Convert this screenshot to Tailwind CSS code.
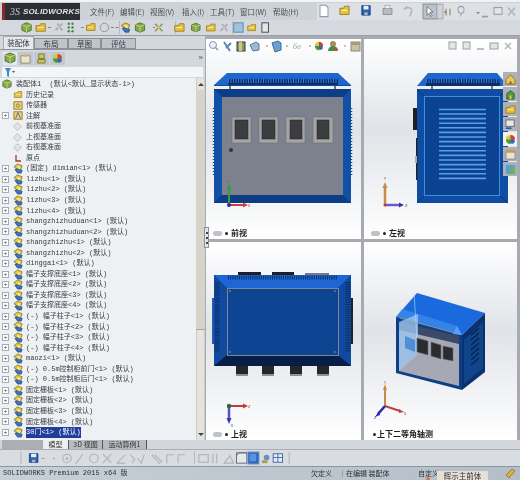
<!DOCTYPE html>
<html><head><meta charset="utf-8">
<script src="https://cdn.jsdelivr.net/npm/@tailwindcss/browser@4"></script>
</head>
<body class="m-0 bg-[#d8dce2]">
<svg width="0" height="0" class="absolute">
<defs>
<symbol id="asm" viewBox="0 0 12 12"><path d="M1 4l4-3 5 2-1 3-4 1z" fill="#e8c63c" stroke="#6a5a10" stroke-width=".7"/><path d="M2 7l4-1 4 2-1 3-4 0z" fill="#3d74b8" stroke="#1c3c70" stroke-width=".7"/><path d="M5 3l3 1v3l-3-1z" fill="#f5e58a"/></symbol>
<symbol id="plane" viewBox="0 0 12 12"><path d="M1 6l5-5 5 5-5 5z" fill="#eef0f2" stroke="#8b9098" stroke-width=".8"/><path d="M4 6l2-2 2 2-2 2z" fill="none" stroke="#b0b5bb" stroke-width=".6"/></symbol>
<symbol id="tb" viewBox="0 0 12 12"><path d="M1 3l5-2 5 2v6l-5 2-5-2z" fill="#7cab52" stroke="#3a6426" stroke-width=".8"/><path d="M1 3l5 2 5-2M6 5v6" fill="none" stroke="#e8d05a"/></symbol>
<symbol id="yl" viewBox="0 0 12 12"><path d="M1 4h4l1-2h5v8H1z" fill="#e6c03e" stroke="#8d7214" stroke-width=".8"/><path d="M3 6h6" stroke="#fff2a8"/></symbol>
<symbol id="gr" viewBox="0 0 12 12"><path d="M2 10L10 2M4 2l6 8" stroke="#a8adb5" stroke-width="2" fill="none"/><circle cx="6" cy="6" r="1.5" fill="#c5c8cd"/></symbol>
<symbol id="bl" viewBox="0 0 12 12"><path d="M2 2h8v8H2z" fill="#5c8ed0" stroke="#22508f"/><path d="M4 2h4v3H4z" fill="#e8eef6"/></symbol>
<symbol id="sv" viewBox="0 0 12 12"><path d="M1 1h10v10H1z" fill="#2a62b4" stroke="#183c7a"/><path d="M3 1h6v4H3z" fill="#e8eef6"/><path d="M4 8h4v3H4z" fill="#a8b4c8"/></symbol>
<symbol id="ball" viewBox="0 0 12 12"><circle cx="6" cy="6" r="5" fill="#d8c83c"/><path d="M6 1a5 5 0 0 1 5 5H6z" fill="#d84030"/><path d="M1 6a5 5 0 0 0 5 5V6z" fill="#4b9a3e"/><circle cx="8" cy="8" r="2.5" fill="#3066c0"/></symbol>
</defs>
</svg>
<div class="w-[520px] h-[480px] flex flex-col overflow-hidden bg-[#d8dce2] text-[#33373d] blur-[0.3px]" style="font-family:'Noto Sans CJK SC','Liberation Sans',sans-serif">

<!-- title bar -->
<div class="h-[20px] flex items-stretch bg-[#cdd2d9] pt-[1px] shrink-0 border-t-2 border-[#f2f3f5]">
 <div class="w-[78px] ml-[2px] bg-[#2c3036] flex items-center text-white overflow-hidden">
  <div class="w-[3px] h-full bg-[#8f2429]"></div>
  <span class="ml-[5px] text-[10px] italic leading-none text-[#c8c8c8]" style="font-family:'Liberation Serif',serif">3S</span>
  <span class="ml-[3px] text-[8px] font-bold italic leading-none tracking-[0.2px] text-[#e4e4e4]" style="font-family:'Liberation Sans',sans-serif">SOLIDWORKS</span>
 </div>
 <div class="flex items-center text-[7.5px] leading-none text-[#4a4f56] whitespace-nowrap ml-[10px] w-[227px]">
  <span class="w-[30px]">文件(F)</span><span class="w-[30px]">编辑(E)</span><span class="w-[32px]">视图(V)</span><span class="w-[28px]">插入(I)</span><span class="w-[30px]">工具(T)</span><span class="w-[33px]">窗口(W)</span><span>帮助(H)</span>
 </div>
 <svg class="flex-1 h-full" viewBox="317 3 203 15" preserveAspectRatio="none">
  <rect x="316" y="3" width="204" height="15" fill="#dde0e4"/>
  <path d="M320 5h6l2 2v8h-8z" fill="#fff" stroke="#8f9bad"/>
  <use href="#yl" x="339" y="4" width="11" height="11"/>
  <use href="#sv" x="361" y="4" width="10" height="11"/>
  <rect x="383" y="8" width="9" height="5" fill="#b7bcc2" stroke="#71767d" stroke-width=".6"/><rect x="385" y="5" width="5" height="3" fill="#eee" stroke="#8a8f96" stroke-width=".5"/>
  <path d="M404 9a5 5 0 0 1 8 0M404 9l3-3M410 15l2-6" fill="none" stroke="#b3b7bd" stroke-width="1.5"/>
  <rect x="423" y="4" width="14" height="13" fill="#bcc2ca" stroke="#8c929a"/>
  <path d="M427 6v8l2-2 2 3 1-1-2-3h3z" fill="#fff" stroke="#55606e" stroke-width=".7"/>
  <rect x="437" y="4" width="6" height="13" fill="#d0d4d9" stroke="#a7acb3"/>
  <path d="M444 11h3" stroke="#777"/><path d="M446 8v6M450 8v6" stroke="#8b7a50"/>
  <circle cx="461" cy="9" r="3" fill="none" stroke="#9aa0a8"/><path d="M461 12v3" stroke="#9aa0a8"/>
  <path d="M476 11l2 2 2-2" fill="#888"/>
  <path d="M482 15h6" stroke="#9aa0a8" stroke-width="1.5"/>
  <rect x="494" y="7" width="8" height="6" fill="#e3e5e8" stroke="#9aa0a8"/>
  <path d="M508 7l7 7M515 7l-7 7" stroke="#b2b6bb" stroke-width="1.5"/>
 </svg>
</div>

<!-- main toolbar -->
<div class="h-[16px] shrink-0 bg-[#d5d9df] border-b border-[#9a9fa6]">
 <svg class="w-full h-full" viewBox="0 20 520 16">
  <use href="#tb" x="5" y="22" width="12" height="12"/>
  <use href="#yl" x="20" y="22" width="12" height="12"/>
  <path d="M34 28h3M106 28h3M101 28h3M69 28h3M146 28h2" stroke="#777"/>
  <use href="#gr" x="40" y="22" width="11" height="11"/>
  <g fill="#3f8a46"><circle cx="56" cy="24" r="1.3"/><circle cx="60" cy="24" r="1.3"/><circle cx="56" cy="28" r="1.3"/><circle cx="60" cy="28" r="1.3"/><circle cx="56" cy="32" r="1.3"/><circle cx="60" cy="32" r="1.3"/></g>
  <use href="#yl" x="74" y="22" width="11" height="11"/>
  <circle cx="94" cy="28" r="4.5" fill="#d6d8da" stroke="#8d9298"/>
  <path d="M110 21v14M170 21v14M231 21v14" stroke="#b0b4ba"/>
  <use href="#asm" x="111" y="22" width="12" height="12"/>
  <use href="#tb" x="126" y="22" width="12" height="12"/>
  <path d="M148 24l8 8M156 24l-8 8" stroke="#7c9e52" stroke-width="1.6"/><circle cx="152" cy="28" r="1.5" fill="#e6c03e"/>
  <use href="#yl" x="168" y="22" width="12" height="12"/>
  <use href="#tb" x="186" y="22" width="11" height="12"/>
  <use href="#yl" x="202" y="22" width="11" height="12"/>
  <use href="#gr" x="216" y="22" width="11" height="12"/>
  <rect x="232" y="23" width="10" height="10" fill="#9fc3de" stroke="#5d86a8"/>
  <use href="#yl" x="246" y="22" width="10" height="12"/>
  <rect x="262" y="23" width="7" height="10" fill="#e6e7e5" stroke="#444"/>
 </svg>
</div>

<!-- main -->
<div class="flex-1 flex min-h-0">
 <!-- left panel -->
 <div class="w-[205px] shrink-0 flex flex-col bg-[#d3d8de]">
  <!-- tabs -->
  <div class="h-[14px] flex items-end pl-[3px] text-[7.5px] leading-none border-b border-[#8f949b] shrink-0">
   <div class="w-[31px] h-[13px] flex items-center justify-center bg-[#e6e9ec] border border-b-0 border-[#a6abb2]">装配体</div>
   <div class="w-[34px] h-[11px] flex items-center justify-center bg-[#bfc4ca] border border-[#8a8f96]">布局</div>
   <div class="w-[33px] h-[11px] flex items-center justify-center bg-[#bfc4ca] border border-[#8a8f96]">草图</div>
   <div class="w-[35px] h-[11px] flex items-center justify-center bg-[#bfc4ca] border border-[#8a8f96]">评估</div>
  </div>
  <!-- icon tabs -->
  <div class="h-[14px] mt-[1px] flex items-center pl-[3px] gap-[1px] shrink-0">
   <div class="w-[14px] h-[13px] bg-[#e6e9ec] flex items-center justify-center"><svg width="12" height="12"><use href="#tb" width="12" height="12"/></svg></div>
   <div class="w-[15px] h-[13px] bg-[#c3c8ce] flex items-center justify-center"><svg width="11" height="11" viewBox="0 0 12 12"><path d="M1 3h10v8H1z" fill="#e8e4d8" stroke="#9a8a6a"/><path d="M4 1h4v3H4z" fill="#d2b468"/></svg></div>
   <div class="w-[15px] h-[13px] bg-[#c3c8ce] flex items-center justify-center"><svg width="11" height="11" viewBox="0 0 12 12"><path d="M3 1h6v5H3zM2 7h8v4H2z" fill="#d8c04e" stroke="#4a5a2a" stroke-width=".7"/></svg></div>
   <div class="w-[15px] h-[13px] bg-[#c3c8ce] flex items-center justify-center"><svg width="11" height="11"><use href="#ball" width="11" height="11"/></svg></div>
   <span class="ml-auto mr-[2px] text-[8px] leading-none text-[#555]" style="font-family:'Liberation Sans',sans-serif">»</span>
  </div>
  <!-- filter -->
  <div class="h-[10px] mt-[2px] mx-[2px] bg-[#f4f5f7] flex items-center pl-[3px] shrink-0">
   <svg width="10" height="9" viewBox="0 0 10 9"><path d="M0 0h6L4 4v5L2 8V4z" fill="#3d8ccc"/><path d="M7 3h3L8.500 5z" fill="#555"/></svg>
  </div>
  <!-- tree -->
  <div class="flex-1 min-h-0 flex bg-[#eef1f4] mt-[1px] overflow-hidden">
   <div class="flex-1 pt-[1px] pl-[2px] text-[7px] leading-[10.56px] text-[#383c42] overflow-hidden whitespace-nowrap" style="font-family:'Liberation Mono','Noto Sans CJK SC',monospace">
    <div class="h-[10.56px] flex items-center"><svg width="10" height="10" class="mr-[3px]"><use href="#tb" width="10" height="10"/></svg><span class="ml-[1px]">装配体1&nbsp;&nbsp;(默认&lt;默认_显示状态-1&gt;)</span></div>
    <div class="h-[10.56px] flex items-center pl-[11px]"><svg width="10" height="9" class="mr-[3px]"><use href="#yl" width="10" height="9"/></svg>历史记录</div>
    <div class="h-[10.56px] flex items-center pl-[11px]"><svg width="10" height="9" class="mr-[3px]" viewBox="0 0 12 11"><rect x="1" y="1" width="10" height="9" fill="#eed47a" stroke="#8a6a20"/><circle cx="6" cy="5.500" r="2" fill="none" stroke="#8a6a20"/></svg>传感器</div>
    <div class="h-[10.56px] flex items-center"><span class="w-[7px] h-[7px] mr-[4px] border border-[#a8adb3] bg-white text-[6px] leading-[5px] text-center">+</span><svg width="10" height="9" class="mr-[3px]" viewBox="0 0 12 11"><rect x="1" y="1" width="10" height="9" fill="#eed47a" stroke="#8a6a20"/><path d="M3 9l3-7 3 7" fill="none" stroke="#2e5fa8"/></svg>注解</div>
    <div class="h-[10.56px] flex items-center pl-[11px]"><svg width="9" height="9" class="mr-[4px]"><use href="#plane" width="9" height="9"/></svg>前视基准面</div>
    <div class="h-[10.56px] flex items-center pl-[11px]"><svg width="9" height="9" class="mr-[4px]"><use href="#plane" width="9" height="9"/></svg>上视基准面</div>
    <div class="h-[10.56px] flex items-center pl-[11px]"><svg width="9" height="9" class="mr-[4px]"><use href="#plane" width="9" height="9"/></svg>右视基准面</div>
    <div class="h-[10.56px] flex items-center pl-[11px]"><svg width="9" height="9" class="mr-[4px]" viewBox="0 0 9 9"><path d="M3 1v6h5" fill="none" stroke="#a83a2a" stroke-width="1.300"/></svg>原点</div>

    <div class="h-[10.56px] flex items-center"><span class="w-[7px] h-[7px] mr-[4px] border border-[#a8adb3] bg-white text-[6px] leading-[5px] text-center">+</span><svg width="11" height="11" class="mr-[2px]"><use href="#asm" width="11" height="11"/></svg>(固定) dimian&lt;1&gt; (默认)</div>
    <div class="h-[10.56px] flex items-center"><span class="w-[7px] h-[7px] mr-[4px] border border-[#a8adb3] bg-white text-[6px] leading-[5px] text-center">+</span><svg width="11" height="11" class="mr-[2px]"><use href="#asm" width="11" height="11"/></svg>lizhu&lt;1&gt; (默认)</div>
    <div class="h-[10.56px] flex items-center"><span class="w-[7px] h-[7px] mr-[4px] border border-[#a8adb3] bg-white text-[6px] leading-[5px] text-center">+</span><svg width="11" height="11" class="mr-[2px]"><use href="#asm" width="11" height="11"/></svg>lizhu&lt;2&gt; (默认)</div>
    <div class="h-[10.56px] flex items-center"><span class="w-[7px] h-[7px] mr-[4px] border border-[#a8adb3] bg-white text-[6px] leading-[5px] text-center">+</span><svg width="11" height="11" class="mr-[2px]"><use href="#asm" width="11" height="11"/></svg>lizhu&lt;3&gt; (默认)</div>
    <div class="h-[10.56px] flex items-center"><span class="w-[7px] h-[7px] mr-[4px] border border-[#a8adb3] bg-white text-[6px] leading-[5px] text-center">+</span><svg width="11" height="11" class="mr-[2px]"><use href="#asm" width="11" height="11"/></svg>lizhu&lt;4&gt; (默认)</div>
    <div class="h-[10.56px] flex items-center"><span class="w-[7px] h-[7px] mr-[4px] border border-[#a8adb3] bg-white text-[6px] leading-[5px] text-center">+</span><svg width="11" height="11" class="mr-[2px]"><use href="#asm" width="11" height="11"/></svg>shangzhizhuduan&lt;1&gt; (默认)</div>
    <div class="h-[10.56px] flex items-center"><span class="w-[7px] h-[7px] mr-[4px] border border-[#a8adb3] bg-white text-[6px] leading-[5px] text-center">+</span><svg width="11" height="11" class="mr-[2px]"><use href="#asm" width="11" height="11"/></svg>shangzhizhuduan&lt;2&gt; (默认)</div>
    <div class="h-[10.56px] flex items-center"><span class="w-[7px] h-[7px] mr-[4px] border border-[#a8adb3] bg-white text-[6px] leading-[5px] text-center">+</span><svg width="11" height="11" class="mr-[2px]"><use href="#asm" width="11" height="11"/></svg>shangzhizhu&lt;1&gt; (默认)</div>
    <div class="h-[10.56px] flex items-center"><span class="w-[7px] h-[7px] mr-[4px] border border-[#a8adb3] bg-white text-[6px] leading-[5px] text-center">+</span><svg width="11" height="11" class="mr-[2px]"><use href="#asm" width="11" height="11"/></svg>shangzhizhu&lt;2&gt; (默认)</div>
    <div class="h-[10.56px] flex items-center"><span class="w-[7px] h-[7px] mr-[4px] border border-[#a8adb3] bg-white text-[6px] leading-[5px] text-center">+</span><svg width="11" height="11" class="mr-[2px]"><use href="#asm" width="11" height="11"/></svg>dinggai&lt;1&gt; (默认)</div>
    <div class="h-[10.56px] flex items-center"><span class="w-[7px] h-[7px] mr-[4px] border border-[#a8adb3] bg-white text-[6px] leading-[5px] text-center">+</span><svg width="11" height="11" class="mr-[2px]"><use href="#asm" width="11" height="11"/></svg>幅子支撑底座&lt;1&gt; (默认)</div>
    <div class="h-[10.56px] flex items-center"><span class="w-[7px] h-[7px] mr-[4px] border border-[#a8adb3] bg-white text-[6px] leading-[5px] text-center">+</span><svg width="11" height="11" class="mr-[2px]"><use href="#asm" width="11" height="11"/></svg>幅子支撑底座&lt;2&gt; (默认)</div>
    <div class="h-[10.56px] flex items-center"><span class="w-[7px] h-[7px] mr-[4px] border border-[#a8adb3] bg-white text-[6px] leading-[5px] text-center">+</span><svg width="11" height="11" class="mr-[2px]"><use href="#asm" width="11" height="11"/></svg>幅子支撑底座&lt;3&gt; (默认)</div>
    <div class="h-[10.56px] flex items-center"><span class="w-[7px] h-[7px] mr-[4px] border border-[#a8adb3] bg-white text-[6px] leading-[5px] text-center">+</span><svg width="11" height="11" class="mr-[2px]"><use href="#asm" width="11" height="11"/></svg>幅子支撑底座&lt;4&gt; (默认)</div>
    <div class="h-[10.56px] flex items-center"><span class="w-[7px] h-[7px] mr-[4px] border border-[#a8adb3] bg-white text-[6px] leading-[5px] text-center">+</span><svg width="11" height="11" class="mr-[2px]"><use href="#asm" width="11" height="11"/></svg>(-) 幅子柱子&lt;1&gt; (默认)</div>
    <div class="h-[10.56px] flex items-center"><span class="w-[7px] h-[7px] mr-[4px] border border-[#a8adb3] bg-white text-[6px] leading-[5px] text-center">+</span><svg width="11" height="11" class="mr-[2px]"><use href="#asm" width="11" height="11"/></svg>(-) 幅子柱子&lt;2&gt; (默认)</div>
    <div class="h-[10.56px] flex items-center"><span class="w-[7px] h-[7px] mr-[4px] border border-[#a8adb3] bg-white text-[6px] leading-[5px] text-center">+</span><svg width="11" height="11" class="mr-[2px]"><use href="#asm" width="11" height="11"/></svg>(-) 幅子柱子&lt;3&gt; (默认)</div>
    <div class="h-[10.56px] flex items-center"><span class="w-[7px] h-[7px] mr-[4px] border border-[#a8adb3] bg-white text-[6px] leading-[5px] text-center">+</span><svg width="11" height="11" class="mr-[2px]"><use href="#asm" width="11" height="11"/></svg>(-) 幅子柱子&lt;4&gt; (默认)</div>
    <div class="h-[10.56px] flex items-center"><span class="w-[7px] h-[7px] mr-[4px] border border-[#a8adb3] bg-white text-[6px] leading-[5px] text-center">+</span><svg width="11" height="11" class="mr-[2px]"><use href="#asm" width="11" height="11"/></svg>maozi&lt;1&gt; (默认)</div>
    <div class="h-[10.56px] flex items-center"><span class="w-[7px] h-[7px] mr-[4px] border border-[#a8adb3] bg-white text-[6px] leading-[5px] text-center">+</span><svg width="11" height="11" class="mr-[2px]"><use href="#asm" width="11" height="11"/></svg>(-) 0.5m控制柜前门&lt;1&gt; (默认)</div>
    <div class="h-[10.56px] flex items-center"><span class="w-[7px] h-[7px] mr-[4px] border border-[#a8adb3] bg-white text-[6px] leading-[5px] text-center">+</span><svg width="11" height="11" class="mr-[2px]"><use href="#asm" width="11" height="11"/></svg>(-) 0.5m控制柜后门&lt;1&gt; (默认)</div>
    <div class="h-[10.56px] flex items-center"><span class="w-[7px] h-[7px] mr-[4px] border border-[#a8adb3] bg-white text-[6px] leading-[5px] text-center">+</span><svg width="11" height="11" class="mr-[2px]"><use href="#asm" width="11" height="11"/></svg>固定栅板&lt;1&gt; (默认)</div>
    <div class="h-[10.56px] flex items-center"><span class="w-[7px] h-[7px] mr-[4px] border border-[#a8adb3] bg-white text-[6px] leading-[5px] text-center">+</span><svg width="11" height="11" class="mr-[2px]"><use href="#asm" width="11" height="11"/></svg>固定栅板&lt;2&gt; (默认)</div>
    <div class="h-[10.56px] flex items-center"><span class="w-[7px] h-[7px] mr-[4px] border border-[#a8adb3] bg-white text-[6px] leading-[5px] text-center">+</span><svg width="11" height="11" class="mr-[2px]"><use href="#asm" width="11" height="11"/></svg>固定栅板&lt;3&gt; (默认)</div>
    <div class="h-[10.56px] flex items-center"><span class="w-[7px] h-[7px] mr-[4px] border border-[#a8adb3] bg-white text-[6px] leading-[5px] text-center">+</span><svg width="11" height="11" class="mr-[2px]"><use href="#asm" width="11" height="11"/></svg>固定栅板&lt;4&gt; (默认)</div>
    <div class="h-[10.56px] flex items-center"><span class="w-[7px] h-[7px] mr-[4px] border border-[#a8adb3] bg-white text-[6px] leading-[5px] text-center">+</span><svg width="11" height="11" class="mr-[2px]"><use href="#asm" width="11" height="11"/></svg><span class="bg-[#1f3f9a] text-white">30门&lt;1&gt; (默认)</span></div>
   </div>
   <!-- scrollbar -->
   <div class="w-[9px] shrink-0 flex flex-col bg-[#e6e3da] border-x border-[#c8cbcf]">
    <div class="h-[12px] flex items-center justify-center"><span class="w-0 h-0 border-x-[3px] border-x-transparent border-b-[3px] border-b-[#444]"></span></div>
    <div class="h-[240px] mx-[-1px] bg-[#d6d3c8] border-b border-[#a6a6a0]"></div>
    <div class="flex-1"></div>
    <div class="h-[12px] flex items-center justify-center"><span class="w-0 h-0 border-x-[3px] border-x-transparent border-t-[3px] border-t-[#444]"></span></div>
   </div>
  </div>
 </div>

 <!-- viewports -->
 <div class="relative flex-1 grid grid-cols-[155px_153px] grid-rows-[200px_198px] gap-[3px] pl-[1px] pt-[3px] bg-[#a7abb1]">
  <div class="absolute left-[-1px] top-[191px] w-[5px] h-[21px] bg-[#e2e4e7] border border-[#8d9197] z-10 flex flex-col items-center justify-center gap-[3px]"><span class="w-[2px] h-[2px] bg-[#444]"></span><span class="w-[2px] h-[2px] bg-[#444]"></span><span class="w-[2px] h-[2px] bg-[#444]"></span></div>

  <!-- front -->
  <div class="relative bg-[linear-gradient(180deg,#fff_0%,#e0e3e8_45%,#fff_100%)] overflow-hidden">
   <svg class="block" width="155" height="200" viewBox="206 39 155 200">
    <circle cx="213" cy="45" r="3.500" fill="#eef" stroke="#8a97a6"/><path d="M215 47l3 3" stroke="#8a97a6" stroke-width="1.500"/>
    <path d="M224 42l6 9M231 43l-5 5" stroke="#5d89b5" stroke-width="2"/>
    <rect x="237" y="42" width="8" height="9" fill="#7ca06c" stroke="#335"/><rect x="239" y="42" width="3" height="9" fill="#d8c46a"/>
    <path d="M250 45l6-3 3 2v6l-6 1z" fill="#9db8d0" stroke="#5a7896"/>
    <path d="M266 46h2M286 46h2M309 46h2M344 46h2" stroke="#888"/>
    <path d="M272 43l6-2 3 2v7l-6 2z" fill="#6b9fd0" stroke="#3c6a9c"/>
    <text x="293" y="49" font-size="8" font-style="italic" fill="#9da2aa" font-family="Liberation Serif">6σ</text>
    <use href="#ball" x="314" y="41" width="10" height="10"/>
    <circle cx="333" cy="44" r="3" fill="#a88a5c"/><path d="M328 51a5 5 0 0 1 10 0z" fill="#4a8a4a"/><circle cx="336" cy="49" r="1.500" fill="#d84030"/>
    <rect x="351" y="42" width="9" height="9" fill="#c8c2a8" stroke="#8e8a74"/><rect x="351" y="42" width="9" height="3" fill="#a59a70"/>
    <path d="M214 85l13-12h111l13 12z" fill="#1d66cc"/>
    <rect x="228" y="79" width="110" height="6" fill="#0e2f66"/>
    <path d="M228 81h110" stroke="#2d7ae0" stroke-dasharray="1 1.500" stroke-width="4"/>
    <rect x="214" y="85" width="137" height="1" fill="#0f4aa0"/>
    <rect x="229" y="86" width="2" height="4" fill="#6f7478"/><rect x="334" y="86" width="2" height="4" fill="#6f7478"/>
    <rect x="214" y="89" width="137" height="114" fill="#1050a6"/>
    <path d="M214 89h137l-8 8H222z" fill="#0c3d85"/><path d="M214 203h137l-8-8H222z" fill="#0c3d85"/>
    <rect x="222" y="97" width="121" height="98" fill="#7d808d"/>
    <g fill="#a4a4a4" stroke="#666a70" stroke-width=".5"><rect x="232" y="117" width="19" height="26"/><rect x="259" y="117" width="19" height="26"/><rect x="286" y="117" width="19" height="26"/><rect x="313" y="117" width="20" height="26"/></g>
    <g fill="#3c3d40" stroke="#222" stroke-width=".5"><rect x="235" y="120" width="13" height="19"/><rect x="262" y="120" width="13" height="19"/><rect x="290" y="120" width="12" height="19"/><rect x="317" y="120" width="12" height="19"/></g>
    <circle cx="231" cy="150" r="2" fill="#2f3340"/>
    <path d="M213.500 108v68M351.500 108v68" stroke="#184a8a" stroke-width="1.500" stroke-dasharray="1 2"/>
    <path d="M229 205v-17" stroke="#3a9a44" stroke-width="2"/><path d="M226.500 190l2.500-6 2.500 6z" fill="#3a9a44"/>
    <path d="M229 205h15" stroke="#d04040" stroke-width="2"/><path d="M243 202.500l5 2.500-5 2.500z" fill="#d04040"/>
    <circle cx="229" cy="205" r="2" fill="#2424c0"/>
    <text x="227" y="183" font-size="4" fill="#666">Y</text><text x="248" y="207" font-size="4" fill="#a33">X</text>
   </svg>
   <div class="absolute left-[7px] top-[189px] flex items-center gap-[3px] text-[8px] font-bold leading-[10px] text-[#222]"><span class="w-[9px] h-[5px] rounded-full bg-[#bfc3c8]"></span><span class="w-[3px] h-[3px] rounded-full bg-[#222]"></span><span>前视</span></div>
  </div>

  <!-- left -->
  <div class="relative bg-[linear-gradient(180deg,#fff_0%,#e0e3e8_45%,#fff_100%)] overflow-hidden">
   <svg class="block" width="153" height="200" viewBox="364 39 153 200">
    <rect x="449" y="42" width="7" height="7" fill="#e3e5e7" stroke="#9aa0a6"/><rect x="463" y="42" width="7" height="7" fill="#e3e5e7" stroke="#9aa0a6"/>
    <path d="M477 49h7" stroke="#a8adb3" stroke-width="1.500"/><rect x="490" y="43" width="8" height="6" fill="#e3e5e7" stroke="#9aa0a6"/>
    <path d="M505 43l6 6M511 43l-6 6" stroke="#b2b6bb" stroke-width="1.500"/>
    <path d="M417 86l11-13h69l11 13z" fill="#1d66cc"/>
    <rect x="426" y="79" width="74" height="7" fill="#0e2f66"/>
    <path d="M426 81h74" stroke="#2d7ae0" stroke-dasharray="1 1.500" stroke-width="4"/>
    <rect x="431" y="86" width="2" height="4" fill="#6f7478"/><rect x="491" y="86" width="2" height="4" fill="#6f7478"/>
    <rect x="417" y="89" width="91" height="114" fill="#0f4ca4"/>
    <path d="M417 89l7 7M508 89l-8 7M417 203l7-7M508 203l-8-7" stroke="#0a3478"/>
    <rect x="424.500" y="96.500" width="75" height="99" fill="#0b4390" stroke="#3f8fe0"/>
    <g stroke="#5a9ee8" stroke-width="1.600"><path d="M439 109.500h47M439 114h47M439 118.600h47M439 123.200h47M439 127.800h47M439 132.400h47M439 137h47M439 141.600h47M439 146.200h47M439 150.800h47M439 155.400h47M439 160h47M439 164.600h47M439 169.200h47M439 173.800h47M439 178.400h47"/></g>
    <rect x="413" y="108" width="4" height="22" fill="#1c2026"/><rect x="416" y="138" width="1.500" height="42" fill="#222"/><rect x="415" y="156" width="2" height="7" fill="#aab"/>
    <path d="M385 205v-18" stroke="#c88a44" stroke-width="2.500"/><path d="M382.500 188l2.500-6 2.500 6z" fill="#c88a44"/>
    <path d="M385 205h15" stroke="#6a5cc8" stroke-width="2.500"/><path d="M399 202.500l5 2.500-5 2.500z" fill="#3c36b0"/>
    <circle cx="385" cy="205" r="1.500" fill="#c04030"/>
    <text x="384" y="180" font-size="4" fill="#666">Y</text><text x="405" y="207" font-size="4" fill="#333">Z</text>
   </svg>
   <!-- task pane -->
   <div class="absolute right-0 top-[33px] w-[14px] flex flex-col gap-[1px]">
    <div class="h-[14px] bg-[#aeb2b8] flex items-center justify-center"><svg width="11" height="11" viewBox="0 0 12 12"><path d="M1 6l5-5 5 5v5H1z" fill="#e6c85a" stroke="#8d6e1a"/><path d="M5 8h2v3H5z" fill="#7a5a1a"/></svg></div>
    <div class="h-[14px] bg-[#aeb2b8] flex items-center justify-center"><svg width="11" height="11" viewBox="0 0 12 12"><path d="M2 5l4-3 4 3v6H2z" fill="#4e9a46" stroke="#25602a"/><path d="M5 7h2v4H5z" fill="#e8c63c"/></svg></div>
    <div class="h-[14px] bg-[#aeb2b8] flex items-center justify-center"><svg width="11" height="11"><use href="#yl" width="11" height="11"/></svg></div>
    <div class="h-[14px] bg-[#aeb2b8] flex items-center justify-center"><svg width="11" height="11" viewBox="0 0 12 12"><rect x="1" y="1" width="9" height="7" fill="#e8e8e8" stroke="#666"/><path d="M1 10h6" stroke="#2040a0" stroke-width="1.500"/></svg></div>
    <div class="h-[14px] bg-[#f0f0f0] flex items-center justify-center"><svg width="11" height="11"><use href="#ball" width="11" height="11"/></svg></div>
    <div class="h-[14px] bg-[#aeb2b8] flex items-center justify-center"><svg width="11" height="11" viewBox="0 0 12 12"><rect x="1" y="3" width="10" height="8" fill="#e8e4d8" stroke="#8a8a7a"/><rect x="1" y="1" width="10" height="3" fill="#c89a5a"/></svg></div>
    <div class="h-[14px] bg-[#aeb2b8] flex items-center justify-center"><svg width="11" height="11" viewBox="0 0 12 12"><rect x="1" y="1" width="10" height="10" fill="#58a0d8"/><rect x="5" y="4" width="6" height="7" fill="#6ab060"/></svg></div>
   </div>
   <div class="absolute left-[7px] top-[189px] flex items-center gap-[3px] text-[8px] font-bold leading-[10px] text-[#222]"><span class="w-[9px] h-[5px] rounded-full bg-[#bfc3c8]"></span><span class="w-[3px] h-[3px] rounded-full bg-[#222]"></span><span>左视</span></div>
  </div>

  <!-- top -->
  <div class="relative bg-[linear-gradient(180deg,#fff_0%,#e0e3e8_45%,#fff_100%)] overflow-hidden">
   <svg class="block" width="155" height="198" viewBox="206 242 155 198">
    <rect x="238" y="272" width="23" height="4" fill="#1d2026"/><rect x="272" y="272" width="22" height="4" fill="#1d2026"/><rect x="305" y="273" width="24" height="3" fill="#777a80"/>
    <rect x="214" y="275" width="137" height="91" fill="#0e4ea6"/>
    <path d="M214 275h137l-13 13H227z" fill="#1e66d4"/>
    <path d="M214 275l13 13v67l-13 11zM351 275l-13 13v67l13 11z" fill="#0f49a0"/>
    <path d="M214 366l13-11h111l13 11z" fill="#071e46"/>
    <path d="M228 277.500h110" stroke="#0e2f66" stroke-width="4" stroke-dasharray="1 1.200"/>
    <path d="M217 282v70M348 282v70" stroke="#0e2f66" stroke-width="5" stroke-dasharray="1 1.200"/>
    <rect x="227.500" y="288.500" width="111" height="67" fill="#0d4592" stroke="#7d8692"/>
    <g fill="#9aa3af"><circle cx="230" cy="291" r=".8"/><circle cx="335" cy="291" r=".8"/><circle cx="230" cy="352" r=".8"/><circle cx="335" cy="352" r=".8"/></g>
    <rect x="212" y="298" width="2" height="46" fill="#1d5cb0"/><rect x="351" y="298" width="2" height="46" fill="#222"/>
    <g fill="#23262b"><rect x="236" y="366" width="12" height="8"/><rect x="262" y="366" width="12" height="8"/><rect x="290" y="366" width="12" height="8"/><rect x="317" y="366" width="12" height="8"/></g>
    <g fill="#8e9196"><rect x="236" y="374" width="12" height="2"/><rect x="262" y="374" width="12" height="2"/><rect x="290" y="374" width="12" height="2"/><rect x="317" y="374" width="12" height="2"/></g>
    <path d="M229 406h15" stroke="#c03c3c" stroke-width="2"/><path d="M243 403.500l5 2.500-5 2.500z" fill="#c03c3c"/>
    <path d="M229 406v13" stroke="#5a50c8" stroke-width="2.500"/><path d="M226.500 418l2.500 6 2.500-6z" fill="#3c36b0"/>
    <circle cx="229" cy="406" r="2.200" fill="#2e6a30"/>
    <text x="248" y="408" font-size="4" fill="#a33">Z</text><text x="231" y="427" font-size="3.500" fill="#33a">X</text>
   </svg>
   <div class="absolute left-[7px] top-[187px] flex items-center gap-[3px] text-[8px] font-bold leading-[10px] text-[#222]"><span class="w-[9px] h-[5px] rounded-full bg-[#bfc3c8]"></span><span class="w-[3px] h-[3px] rounded-full bg-[#222]"></span><span>上视</span></div>
  </div>

  <!-- iso -->
  <div class="relative bg-[linear-gradient(180deg,#fff_0%,#e0e3e8_45%,#fff_100%)] overflow-hidden">
   <svg class="block" width="153" height="198" viewBox="364 242 153 198">
    <path d="M396 317l21-24 68 20-23 22z" fill="#1a6ade"/>
    <path d="M396 317l6-8 55 17 5 9z" fill="#3f8ff0" opacity=".7"/>
    <path d="M396 317l66 18v55l-66-17z" fill="#0d3f88"/>
    <path d="M399 328l60 14v44l-60-15z" fill="#a6a9b3"/>
    <path d="M399 322l60 14v8l-60-14z" fill="#3a4a68"/>
    <path d="M399 322l19-8v40l-19 17z" fill="#9cc4ee" opacity=".8"/>
    <path d="M405 336l10 4v12l-10-4z" fill="#4f8ed8"/>
    <path d="M462 335l23-22v59l-23 18z" fill="#0a3070"/>
    <path d="M464 340l19-18v46l-19 16z" fill="#10458c"/>
    <g stroke="#06224e" stroke-width="1.200"><path d="M471 335l8-7M471 340l8-7M471 345l8-7M471 350l8-7M471 355l8-7M471 360l8-7M471 365l8-7"/></g>
    <path d="M414 293l3 46" stroke="#bcd8f8" stroke-width=".6"/><path d="M400 318l58 16" stroke="#a8a178" stroke-width=".7"/>
    <path d="M457 326l-4 8 9 1z" fill="#5aa0f0"/>
    <g fill="#2a2c30" stroke="#6c6f75" stroke-width=".6"><path d="M417 338l11 3v14l-11-3z"/><path d="M431 342l10 3v14l-10-3z"/><path d="M443 346l10 2v13l-10-2z"/></g>
    <path d="M385 406v-18" stroke="#c88a44" stroke-width="2"/><path d="M383 390l2-6 2 6z" fill="#c88a44"/>
    <path d="M385 406l15 5" stroke="#c04040" stroke-width="2"/><path d="M399 409l5 3-5 1z" fill="#c04040"/>
    <path d="M385 406l-7 8" stroke="#2a2ab0" stroke-width="2.500"/><path d="M379 411l-4 6 5-2z" fill="#2a2ab0"/>
    <text x="384" y="384" font-size="4" fill="#666">Y</text><text x="404" y="415" font-size="4" fill="#a33">X</text><text x="374" y="419" font-size="4" fill="#33a">Z</text>
   </svg>
   <div class="absolute left-[9px] top-[187px] flex items-center gap-[1px] text-[8px] font-bold leading-[10px] text-[#222]"><span class="w-[3px] h-[3px] rounded-full bg-[#222]"></span><span>上下二等角轴测</span></div>
  </div>
 </div>
</div>

<!-- model tabs -->
<div class="h-[9px] shrink-0 flex items-stretch bg-[#d3d6da] text-[7px] leading-[9px] text-[#333]">
 <div class="w-[41px] bg-[#9a9ea4] opacity-70 ml-[2px]"></div>
 <div class="w-[25px] text-center bg-[#eceef0]">模型</div>
 <div class="w-[35px] text-center bg-[#b8bcc2] border-x border-[#555]">3D 视图</div>
 <div class="w-[44px] text-center bg-[#b8bcc2] border-r border-[#555]">运动算例1</div>
</div>

<!-- sketch toolbar -->
<div class="h-[17px] shrink-0 bg-[#d9dde2] border-t border-[#a9adb3]">
 <svg class="w-full h-full" viewBox="0 449 520 17">
  <path d="M6 451v13" stroke="#888" stroke-dasharray="1 1"/>
  <use href="#sv" x="14" y="452" width="11" height="11"/>
  <path d="M28 458h3M40 458h2" stroke="#999"/>
  <g fill="none" stroke="#b0b4ba" stroke-width="1.200">
   <circle cx="55" cy="458" r="4.500"/><circle cx="55" cy="458" r="1"/><path d="M64 464l8-11"/>
   <path d="M79 458a4.500 4.500 0 1 0 9 0a4.500 4.500 0 1 0-9 0"/><path d="M93 453l9 10M102 453l-9 10"/><path d="M108 463l9-9M108 463h9"/>
   <path d="M122 454l5 5-3 4M130 458l4 5 3-9"/><path d="M145 454l9 10M148 454l8 8"/><path d="M161 463v-9h8M173 463v-9h7"/>
   <rect x="195" y="454" width="10" height="8"/><path d="M210 453v10M214 453v10"/>
   <path d="M222 463l6-8 4 8z"/>
  </g>
  <rect x="190" y="451" width="1" height="13" fill="#b0b4ba"/>
  <rect x="235" y="452" width="11" height="11" fill="#e6e8ea" stroke="#666a70"/><path d="M235 455l3-3h8" fill="none" stroke="#666a70"/>
  <rect x="247" y="451" width="12" height="13" fill="#2f68c0" stroke="#8ea6c8"/><rect x="249" y="453" width="7" height="8" fill="#5a92e0"/>
  <circle cx="267" cy="457" r="3" fill="#5a94c8"/><rect x="262" y="460" width="6" height="3" fill="#b09a50"/>
  <rect x="274" y="453" width="10" height="9" fill="#e8edf4" stroke="#3a6aa8"/><path d="M279 453v9M274 457h10" stroke="#3a6aa8"/>
  <path d="M291 451v13" stroke="#aab0b6"/>
 </svg>
</div>

<!-- status bar -->
<div class="relative h-[14px] shrink-0 flex items-center text-[7px] leading-none text-[#2d3136] bg-[linear-gradient(90deg,#c7d0d8,#b4bec8)] border-t border-[#8f959c]">
 <span class="pl-[3px] w-[311px]" style="font-family:'Liberation Mono','Noto Sans CJK SC',monospace">SOLIDWORKS Premium 2015 x64 版</span>
 <span class="w-[31px]">欠定义</span>
 <span class="w-[76px] border-l border-[#9ba2a9] pl-[3px]">在编辑 装配体</span>
 <span>自定义</span>
 <svg class="absolute left-[505px] top-[1px]" width="11" height="11" viewBox="0 0 11 11"><path d="M1 7l6-6 3 2-6 7z" fill="#d8b040" stroke="#8a6a18" stroke-width=".7"/></svg>
 <div class="absolute left-[437px] top-[4px] w-[51px] h-[10px] bg-[#e6dfd3] text-center text-[7.5px] leading-[10px]">辉示主前体</div>
 <span class="absolute left-[426px] top-[10px] w-[4px] h-[4px] rounded-full bg-[#e07840]"></span>
</div>

</div>
</body></html>
